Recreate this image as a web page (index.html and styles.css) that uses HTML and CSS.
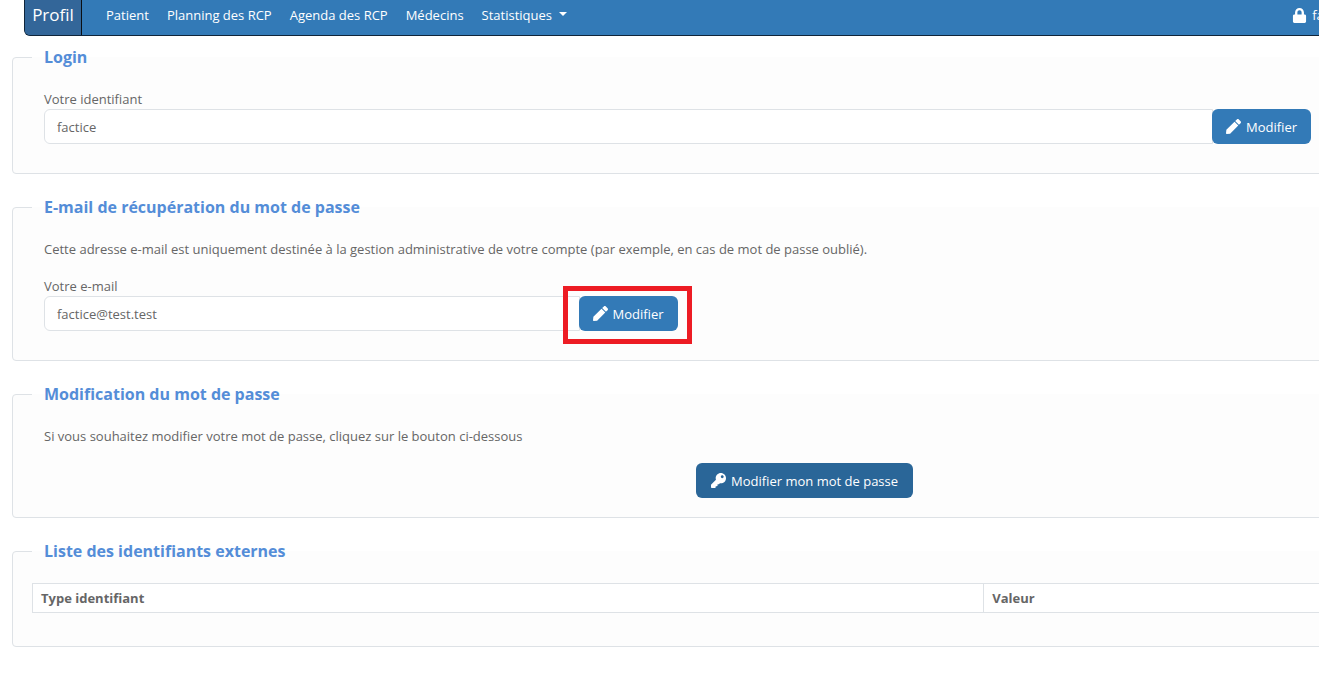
FILE: index.html
```html
<!DOCTYPE html>
<html lang="fr">
<head>
<meta charset="utf-8">
<title>Profil</title>
<link rel="stylesheet" href="styles.css">
</head>
<body>
<svg class="sprite" aria-hidden="true">
  <symbol id="pen" viewBox="0 0 512 512"><path d="M290.74 93.24l128.02 128.02-277.99 277.99-114.14 12.6C11.35 513.54-1.56 500.62.14 485.34l12.7-114.22 277.9-277.88zm207.2-19.06l-60.11-60.11c-18.75-18.75-49.16-18.75-67.91 0l-56.55 56.55 128.02 128.02 56.55-56.55c18.75-18.76 18.75-49.16 0-67.91z"/></symbol>
  <symbol id="key" viewBox="0 0 512 512"><path d="M512 176.001C512 273.203 433.202 352 336 352c-11.22 0-22.19-1.062-32.827-3.069l-24.012 27.014A23.999 23.999 0 0 1 261.223 384H224v40c0 13.255-10.745 24-24 24h-40v40c0 13.255-10.745 24-24 24H24c-13.255 0-24-10.745-24-24v-78.059c0-6.365 2.529-12.47 7.029-16.971l161.802-161.802C163.108 213.814 160 195.271 160 176 160 78.798 238.797.001 335.999 0 433.488-.001 512 78.511 512 176.001zM336 128c0 26.51 21.49 48 48 48s48-21.49 48-48-21.49-48-48-48-48 21.49-48 48z"/></symbol>
  <symbol id="lock" viewBox="0 0 448 512"><path d="M400 224h-24v-72C376 68.2 307.8 0 224 0S72 68.2 72 152v72H48c-26.5 0-48 21.5-48 48v192c0 26.5 21.5 48 48 48h352c26.5 0 48-21.5 48-48V272c0-26.5-21.5-48-48-48zm-104 0H152v-72c0-39.7 32.3-72 72-72s72 32.3 72 72v72z"/></symbol>
</svg>
<div class="page">
  <nav class="navbar">
    <a class="brand" href="#">Profil</a>
    <div class="menu">
      <a href="#">Patient</a>
      <a href="#">Planning des RCP</a>
      <a href="#">Agenda des RCP</a>
      <a href="#">Médecins</a>
      <a class="dropdown" href="#">Statistiques</a>
    </div>
    <a class="user" href="#"><svg class="icon" aria-hidden="true"><use href="#lock"/></svg>factice</a>
  </nav>
  <main class="content">
    <fieldset>
      <legend>Login</legend>
      <div class="field wide">
        <label for="login">Votre identifiant</label>
        <div class="group">
          <input id="login" type="text" value="factice">
          <button class="btn" type="button"><svg class="icon" aria-hidden="true"><use href="#pen"/></svg>Modifier</button>
        </div>
      </div>
    </fieldset>
    <fieldset>
      <legend>E-mail de récupération du mot de passe</legend>
      <p>Cette adresse e-mail est uniquement destinée à la gestion administrative de votre compte (par exemple, en cas de mot de passe oublié).</p>
      <div class="field half">
        <label for="email">Votre e-mail</label>
        <div class="group">
          <input id="email" type="text" value="factice@test.test">
          <button class="btn highlighted" type="button"><svg class="icon" aria-hidden="true"><use href="#pen"/></svg>Modifier</button>
        </div>
      </div>
    </fieldset>
    <fieldset>
      <legend>Modification du mot de passe</legend>
      <p>Si vous souhaitez modifier votre mot de passe, cliquez sur le bouton ci-dessous</p>
      <div class="actions">
        <button class="btn dark" type="button"><svg class="icon" aria-hidden="true"><use href="#key"/></svg>Modifier mon mot de passe</button>
      </div>
    </fieldset>
    <fieldset>
      <legend>Liste des identifiants externes</legend>
      <table>
        <thead>
          <tr><th class="type" scope="col">Type identifiant</th><th scope="col">Valeur</th></tr>
        </thead>
      </table>
    </fieldset>
  </main>
</div>
</body>
</html>
```
FILE: styles.css
```css
* { box-sizing: border-box; }

body {
  margin: 0;
  overflow: hidden;
  background: #fff;
  color: #666;
  font: 13px/20px "Segoe UI", "Open Sans", "Noto Sans", sans-serif;
}

.sprite { display: none; }

/* The layout is wider than the viewport and runs off its right side */
.page { width: 122%; }

.navbar {
  display: flex;
  height: 36px;
  margin: 0 24px;
  overflow: hidden;
  background: #337ab7;
  border: 1px solid #10253a;
  border-top: 0;
  border-radius: 0 0 6px 6px;
}

.navbar a {
  color: #fff;
  line-height: 30px;
  text-decoration: none;
}

.navbar .brand {
  width: 57px;
  background: #336699;
  border-right: 1px solid #0a0f14;
  font-size: 17px;
  text-align: center;
}

.menu {
  display: flex;
  gap: 18px;
  padding-left: 24px;
}

.dropdown::after {
  content: "";
  display: inline-block;
  margin-left: 7px;
  vertical-align: 4px;
  border: 4px solid transparent;
  border-top-color: #fff;
  border-bottom: 0;
}

.user {
  display: flex;
  flex: 0 0 292px;
  align-items: center;
  gap: 5px;
  height: 30px;
  margin-left: auto;
}

.icon {
  width: 15px;
  height: 15px;
  fill: currentColor;
}

.content { padding: 9px 12px 0; }

fieldset {
  min-width: 0;
  margin: 0 0 21px;
  padding: 0 19px 19px;
  background: #fdfdfd;
  border: 1px solid #dee2e6;
  border-radius: 4px;
}

legend {
  width: 100%;
  margin-bottom: 20px;
  padding: 0 12px;
  color: #548dd8;
  font-size: 16px;
  font-weight: 700;
  line-height: 24px;
}

p {
  margin: 0 12px 16px;
  line-height: 21px;
}

.field { margin: 0 12px 10px; }
.wide { width: 82%; }
.half { width: 41%; }

label { display: block; }

.group { display: flex; }

input {
  flex: 1;
  min-width: 0;
  height: 35px;
  padding: 0 12px;
  background: #fff;
  border: 1px solid #dee2e6;
  border-radius: 6px 0 0 6px;
  color: #666;
  font: inherit;
}

.btn {
  display: flex;
  align-items: center;
  justify-content: center;
  gap: 5px;
  height: 35px;
  padding: 0 15px;
  background: #337ab7;
  border: 0;
  border-radius: 6px;
  color: #fff;
  font: inherit;
}

.group .btn {
  width: 99px;
  padding: 0;
  margin-left: -1px;
}

.btn.dark { background: #2a6698; }

.highlighted { position: relative; }

.highlighted::after {
  content: "";
  position: absolute;
  inset: -10px -14px -13px -16px;
  border: 5px solid #ed1c24;
}

.actions {
  display: flex;
  justify-content: center;
}

table {
  width: 100%;
  margin-bottom: 14px;
  border-collapse: collapse;
  background: #fff;
}

th {
  padding: 4px 8px;
  border: 1px solid #dee2e6;
  text-align: left;
}

.type { width: 61.6%; }
```
